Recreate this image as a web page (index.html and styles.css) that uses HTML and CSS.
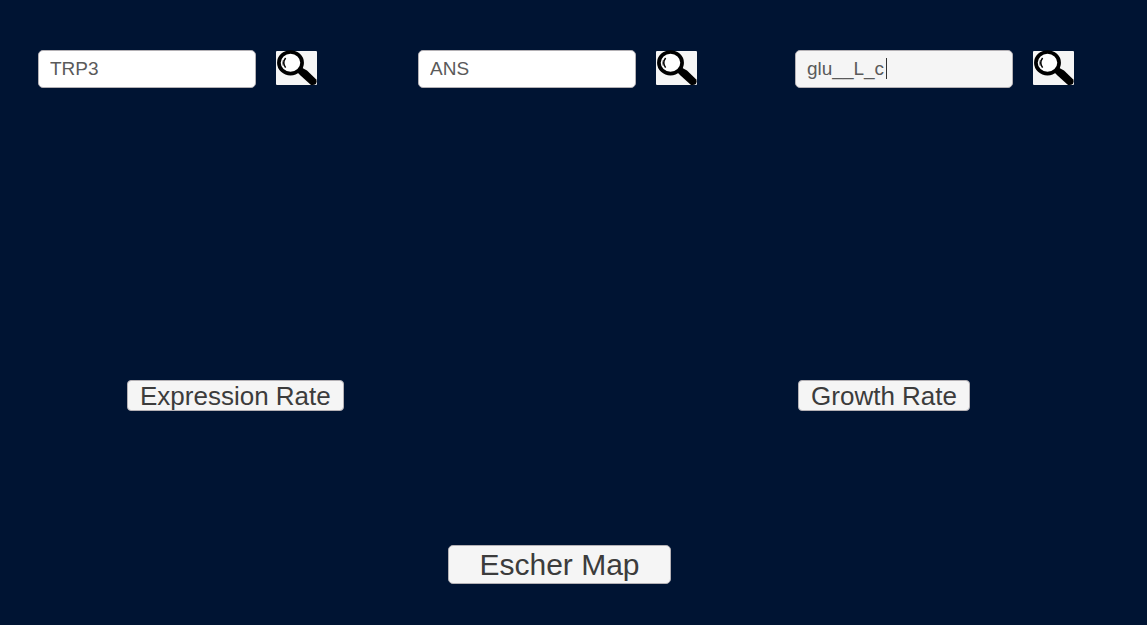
FILE: index.html
```html
<!DOCTYPE html>
<html lang="en">
<head>
<meta charset="utf-8">
<title>Escher Map Search</title>
<meta name="viewport" content="width=device-width, initial-scale=1">
<link rel="stylesheet" href="styles.css">
</head>
<body>
<svg class="sprite" aria-hidden="true">
  <symbol id="magnifier" viewBox="0 0 41 36">
    <path d="M20.5 22.5 L25.5 18.5 L31 21.5 L40.3 30.5 Q41 33 39.8 35 Q38 36.2 35 36 L24.5 26.6 Z" fill="#000"/>
    <ellipse cx="14.5" cy="13.8" rx="11.6" ry="10.8" fill="#fff" stroke="#000" stroke-width="3.7"/>
    <path d="M9.6 9 Q6 13.7 9.6 18.6" fill="none" stroke="#000" stroke-width="1.5"/>
    <path d="M7.4 11 Q5.8 13.7 7.2 16.7" fill="none" stroke="#000" stroke-width=".6"/>
  </symbol>
</svg>
<main class="page">
  <section class="searches">
    <form class="search">
      <input class="field" type="text" value="TRP3" aria-label="Gene">
      <button class="go" type="button" aria-label="Search gene"><svg class="icon"><use href="#magnifier"/></svg></button>
    </form>
    <form class="search">
      <input class="field" type="text" value="ANS" aria-label="Reaction">
      <button class="go" type="button" aria-label="Search reaction"><svg class="icon"><use href="#magnifier"/></svg></button>
    </form>
    <form class="search">
      <input class="field field-active" type="text" value="glu__L_c" aria-label="Metabolite">
      <span class="caret"></span>
      <button class="go" type="button" aria-label="Search metabolite"><svg class="icon"><use href="#magnifier"/></svg></button>
    </form>
  </section>
  <section class="rates">
    <button class="btn" type="button">Expression Rate</button>
    <button class="btn" type="button">Growth Rate</button>
  </section>
  <section class="map">
    <button class="btn btn-large" type="button">Escher Map</button>
  </section>
</main>
</body>
</html>
```
FILE: styles.css
```css
* {
  box-sizing: border-box;
}

body {
  margin: 0;
  background: #001433;
  font-family: "Liberation Sans", Arial, sans-serif;
  color: #3c3c3c;
}

.sprite {
  position: absolute;
  width: 0;
  height: 0;
}

.page {
  min-height: 100vh;
  padding-top: 50px;
}

.searches {
  display: grid;
  grid-template-columns: 380fr 377fr 352fr;
  padding-left: 38px;
}

.search {
  position: relative;
  display: flex;
  align-items: flex-start;
  gap: 20px;
}

.field {
  width: 218px;
  height: 38px;
  padding: 0 11px;
  border: 1px solid #b4b1b5;
  border-radius: 5px;
  background: #fff;
  font: 19px "Liberation Sans", Arial, sans-serif;
  color: #5a5a5a;
  outline: none;
}

.field-active {
  background: #f5f5f5;
}

.caret {
  position: absolute;
  left: 91px;
  top: 8px;
  width: 1px;
  height: 21px;
  background: #323232;
}

.go {
  display: flex;
  align-items: flex-end;
  width: 41px;
  height: 34px;
  margin: 1px 0 0;
  padding: 0;
  border: 0;
  border-radius: 1px;
  background: #f5f5f5;
}

.icon {
  flex: none;
  width: 41px;
  height: 36px;
}

.rates {
  display: flex;
  justify-content: space-between;
  margin-top: 292px;
  padding: 0 177px 0 127px;
}

.btn {
  height: 31px;
  padding: 1px 12px 0;
  border: 1px solid #b4b1b5;
  border-radius: 4px;
  background: #f5f5f5;
  font: 26px/28px "Liberation Sans", Arial, sans-serif;
  color: #3c3c3c;
}

.map {
  display: flex;
  justify-content: center;
  margin-top: 134px;
  padding-right: 28px;
}

.btn-large {
  height: 39px;
  padding: 0 30px;
  border-radius: 5px;
  font-size: 30px;
  line-height: 36px;
}
```
